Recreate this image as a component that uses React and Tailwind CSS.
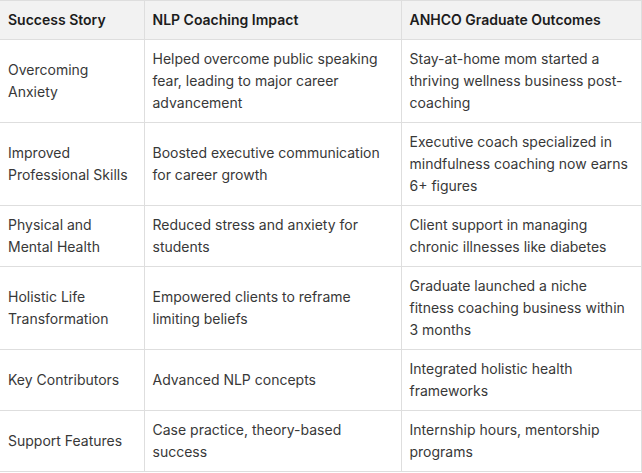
import React from 'react'

const rows = [
  ['Overcoming Anxiety', 'Helped overcome public speaking fear, leading to major career advancement', 'Stay-at-home mom started a thriving wellness business post-coaching'],
  ['Improved Professional Skills', 'Boosted executive communication for career growth', 'Executive coach specialized in mindfulness coaching now earns 6+ figures'],
  ['Physical and Mental Health', 'Reduced stress and anxiety for students', 'Client support in managing chronic illnesses like diabetes'],
  ['Holistic Life Transformation', 'Empowered clients to reframe limiting beliefs', 'Graduate launched a niche fitness coaching business within 3 months'],
  ['Key Contributors', 'Advanced NLP concepts', 'Integrated holistic health frameworks'],
  ['Support Features', 'Case practice, theory-based success', 'Internship hours, mentorship programs'],
]

export default function App() {
  return (
    <div className="w-[642px] h-[473px] bg-white overflow-hidden font-['Inter',sans-serif] text-[14px] leading-[22px]">
      <table className="w-[641px] table-fixed border-collapse border-t border-r border-[#dedede]">
        <colgroup>
          <col className="w-[144px]" />
          <col className="w-[257px]" />
          <col className="w-[240px]" />
        </colgroup>
        <thead>
          <tr className="bg-[#f2f2f2] text-left text-[#1c1c1c]">
            <th className="px-2 py-2 font-semibold border-b border-[#dedede]">Success Story</th>
            <th className="px-2 py-2 font-semibold border-b border-l border-[#dedede]">NLP Coaching Impact</th>
            <th className="px-2 py-2 font-semibold border-b border-l border-[#dedede]">ANHCO Graduate Outcomes</th>
          </tr>
        </thead>
        <tbody className="text-[#383838]">
          {rows.map((r, i) => (
            <tr key={i}>
              <td className="px-2 py-2 pr-3 align-middle border-b border-[#dedede]">{r[0]}</td>
              <td className="px-2 py-2 align-middle border-b border-l border-[#dedede]">{r[1]}</td>
              <td className="px-2 py-2 align-middle border-b border-l border-[#dedede]">{r[2]}</td>
            </tr>
          ))}
        </tbody>
      </table>
    </div>
  )
}
